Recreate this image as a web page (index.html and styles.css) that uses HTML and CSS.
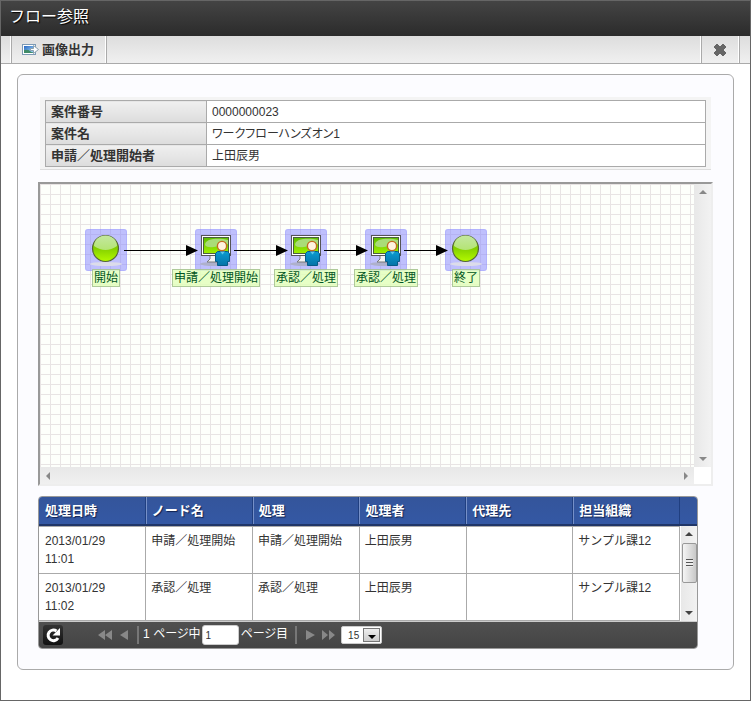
FILE: index.html
```
<!DOCTYPE html>
<html lang="ja">
<head>
<meta charset="utf-8">
<title>フロー参照</title>
<link rel="stylesheet" href="styles.css">
</head>
<body>
<svg class="defs" aria-hidden="true">
  <defs>
    <linearGradient id="ball" x1="0" y1="0" x2="0" y2="1"><stop offset="0" stop-color="#86cc10"/><stop offset=".5" stop-color="#84d000"/><stop offset="1" stop-color="#b4fa00"/></linearGradient>
    <linearGradient id="gloss" x1="0" y1="0" x2="0" y2="1"><stop offset="0" stop-color="#c4e8a0"/><stop offset="1" stop-color="#b4e474"/></linearGradient>
    <linearGradient id="screen" x1="0" y1="0" x2="0" y2="1"><stop offset="0" stop-color="#5cbc00"/><stop offset="1" stop-color="#a0f000"/></linearGradient>
    <linearGradient id="coat" x1="0" y1="0" x2="0" y2="1"><stop offset="0" stop-color="#0a9bd0"/><stop offset="1" stop-color="#0673a8"/></linearGradient>
    <linearGradient id="sky" x1="0" y1="0" x2="1" y2="1"><stop offset="0" stop-color="#2768c4"/><stop offset="1" stop-color="#a9dcf8"/></linearGradient>
    <symbol id="event" viewBox="0 0 42 42">
      <ellipse cx="21" cy="35" rx="16" ry="2" fill="#dcdcea"/>
      <circle cx="20.500" cy="19.500" r="13" fill="url(#ball)" stroke="#55653c" stroke-width="1.200"/>
      <path d="M9 17a11.500 10.500 0 0 1 23 0q-11.500 8-23 0z" fill="url(#gloss)"/>
    </symbol>
    <symbol id="task" viewBox="0 0 42 42">
      <ellipse cx="20" cy="35" rx="15" ry="2" fill="#aeb0cc"/>
      <path d="M15 26h9l2 7H12l3-3z" fill="#f4f4f4" stroke="#777"/>
      <rect x="6.500" y="6.500" width="29" height="20" fill="#fff" stroke="#555"/>
      <rect x="8.500" y="8.500" width="25" height="16" fill="url(#screen)" stroke="#4b5d40"/>
      <path d="M10 16c0-7 15-7 23-5v4q-8 2-14 3-7 1-9-2z" fill="#a9dc78"/>
      <path d="M20.500 24.500l2-2h10l2 2v8h-2v4h-10v-4h-2z" fill="url(#coat)" stroke="#075b88"/>
      <path d="M25 22.500l2.500 3 2.500-3z" fill="#5cc4e8"/>
      <circle cx="27" cy="17" r="4.600" fill="#fff3df" stroke="#c46a20" stroke-width="1.400"/>
    </symbol>
  </defs>
</svg>
<div class="page">
  <header class="titlebar"><h1>フロー参照</h1></header>
  <div class="toolbar">
    <button class="tool" type="button">
      <svg width="17" height="12" viewBox="0 0 17 12" aria-hidden="true"><rect x=".5" y=".5" width="13" height="10" fill="#fff" stroke="#7c9ab5"/><path d="M2 2h10v7H2z" fill="url(#sky)"/><path d="M2 6q4-1 6 1t4 1v1H2z" fill="#3f8b68"/><path d="M8.500 4.500h3v-3l5 4-5 4v-3h-3z" fill="#fff" stroke="#8aa0ae"/></svg>
      <span>画像出力</span>
    </button>
    <button class="tool close" type="button" aria-label="閉じる">
      <svg width="14" height="14" viewBox="0 0 14 14" aria-hidden="true"><path d="M4 1l3 3 3-3 3 3-3 3 3 3-3 3-3-3-3 3-3-3 3-3-3-3z" fill="#666" stroke="#666" stroke-linejoin="round"/></svg>
    </button>
  </div>
  <main class="panel">
    <div class="summary">
      <table>
        <tr><th scope="row">案件番号</th><td>0000000023</td></tr>
        <tr><th scope="row">案件名</th><td class="tight">ワークフローハンズオン1</td></tr>
        <tr><th scope="row">申請／処理開始者</th><td>上田辰男</td></tr>
      </table>
    </div>

    <div class="flow">
      <div class="canvas">
        <svg class="edges" width="420" height="90" viewBox="0 0 420 90" aria-hidden="true">
          <path d="M84 66.500h72M194 66.500h52M284 66.500h42M364 66.500h42" stroke="#000"/>
          <path d="M146 61v11l12-5.500zM236 61v11l12-5.500zM316 61v11l12-5.500zM396 61v11l12-5.500z"/>
        </svg>
        <div class="node n1"><svg class="icon"><use href="#event"/></svg><span>開始</span></div>
        <div class="node n2"><svg class="icon"><use href="#task"/></svg><span>申請／処理開始</span></div>
        <div class="node n3"><svg class="icon"><use href="#task"/></svg><span>承認／処理</span></div>
        <div class="node n4"><svg class="icon"><use href="#task"/></svg><span>承認／処理</span></div>
        <div class="node n5"><svg class="icon"><use href="#event"/></svg><span>終了</span></div>
      </div>
      <div class="bar vertical"><i class="arrow up"></i><i class="arrow down"></i></div>
      <div class="bar horizontal"><i class="arrow left"></i><i class="arrow right"></i></div>
    </div>

    <section class="history">
      <table class="head">
        <colgroup><col span="6"><col class="gutter"></colgroup>
        <thead><tr><th>処理日時</th><th>ノード名</th><th>処理</th><th>処理者</th><th>代理先</th><th>担当組織</th><th></th></tr></thead>
      </table>
      <div class="body">
        <table class="rows">
          <tbody>
            <tr><td>2013/01/29<br>11:01</td><td>申請／処理開始</td><td>申請／処理開始</td><td>上田辰男</td><td></td><td>サンプル課12</td></tr>
            <tr><td>2013/01/29<br>11:02</td><td>承認／処理</td><td>承認／処理</td><td>上田辰男</td><td></td><td>サンプル課12</td></tr>
          </tbody>
        </table>
        <div class="bar vertical"><i class="arrow up dark"></i><i class="thumb"></i><i class="arrow down dark"></i></div>
      </div>
      <footer class="pager">
        <button class="reload" type="button" aria-label="更新">
          <svg width="20" height="20" viewBox="0 0 20 20" aria-hidden="true"><path d="M13.500 6A5.300 5.300 0 1 0 15 13" fill="none" stroke="#fff" stroke-width="3"/><path d="M17 3v7.500H9.500z" fill="#fff"/></svg>
        </button>
        <button class="nav first" type="button" aria-label="最初"><svg width="14" height="10" viewBox="0 0 14 10"><path d="M7 0v10L0 5zM14 0v10L7 5z"/></svg></button>
        <button class="nav" type="button" aria-label="前"><svg width="8" height="10" viewBox="0 0 8 10"><path d="M8 0v10L0 5z"/></svg></button>
        <i class="sep"></i>
        <label class="pages" for="page">1 ページ中</label>
        <input id="page" type="text" value="1">
        <span class="unit">ページ目</span>
        <i class="sep"></i>
        <button class="nav" type="button" aria-label="次"><svg width="9" height="10" viewBox="0 0 9 10"><path d="M0 0v10l9-5z"/></svg></button>
        <button class="nav last" type="button" aria-label="最後"><svg width="13" height="10" viewBox="0 0 13 10"><path d="M0 0v10l6-5zM7 0v10l6-5z"/></svg></button>
        <div class="size">
          <select aria-label="表示件数"><option>15</option></select>
          <i class="drop"></i>
        </div>
      </footer>
    </section>
  </main>
</div>
</body>
</html>
```

FILE: styles.css
```
* { box-sizing: border-box; }
body {
  margin: 0;
  font-family: "Liberation Sans", "Noto Sans CJK JP", sans-serif;
  font-size: 12px;
  color: #333;
  background: #fff;
}
button { border: 0; padding: 0; background: none; font: inherit; color: inherit; }
table { border-collapse: collapse; border-spacing: 0; width: 100%; table-layout: fixed; }
.defs { position: absolute; width: 0; height: 0; }
.page { min-height: 100vh; border: 1px solid #666; }

.titlebar {
  height: 35px;
  padding: 0 8px;
  background: linear-gradient(#444, #2b2b2b);
}
.titlebar h1 {
  margin: 0;
  font-size: 16px;
  font-weight: 400;
  line-height: 32px;
  color: #fff;
  text-shadow: 1px 1px 1px #000;
}
.toolbar {
  display: flex;
  justify-content: space-between;
  height: 28px;
  padding: 0 10px;
  background: linear-gradient(#ddd, #f0f0f0);
  border-bottom: 1px solid #aaa;
}
.tool {
  display: flex;
  align-items: center;
  gap: 3px;
  padding: 0 12px 0 10px;
  border: 1px solid #aaa;
  border-width: 0 1px;
  box-shadow: -1px 0 #fff, inset -1px 0 #fff;
  font-size: 13px;
  font-weight: 700;
  line-height: 26px;
}
.close { padding: 0 12px 0 11px; }

.panel {
  margin: 10px 16px 30px;
  padding: 22px 20px 20px;
  border: 1px solid #aaa;
  border-radius: 6px;
  background: #fcfcff;
}
.summary {
  margin: 0 2px 12px;
  padding: 3px 5px 2px;
  background: #f4f4f4;
  border-bottom: 1px solid #ddd;
}
.summary th, .summary td {
  height: 22px;
  padding: 0 5px;
  border: 1px solid #aaa;
  text-align: left;
  line-height: 18px;
  background: #fff;
}
.summary th {
  width: 161px;
  font-size: 13px;
  background: linear-gradient(#f0f0f0, #dcdcdc);
}
.summary td { font-size: 12px; }
.tight { font-feature-settings: "palt"; }

.flow {
  display: grid;
  grid-template-columns: 1fr 17px;
  grid-template-rows: 283px 17px;
  border: 2px solid #eee;
  border-top-color: #999;
  border-left-color: #999;
  background: #fff;
}
.canvas {
  position: relative;
  overflow: hidden;
  background-color: #fdfffb;
  background-image: linear-gradient(#e8e4e4 1px, transparent 1px), linear-gradient(90deg, #e8e4e4 1px, transparent 1px);
  background-size: 10px 10px;
}
.edges { position: absolute; left: 0; top: 0; z-index: 1; }
.node {
  position: absolute;
  top: 45px;
  width: 42px;
  display: flex;
  flex-direction: column;
  align-items: center;
}
.icon {
  width: 42px;
  height: 42px;
  flex: none;
  border-radius: 3px;
  background: rgba(130, 130, 255, .5);
  box-shadow: inset 0 0 0 1px rgba(130, 130, 255, .2);
}
.node span {
  margin-top: -2px;
  padding: 0 1px;
  border: 1px solid rgba(120, 150, 110, .5);
  background: rgba(225, 255, 185, .8);
  line-height: 16px;
  white-space: nowrap;
  color: #052;
  z-index: 1;
}
.n1 { left: 45px; }
.n2 { left: 155px; }
.n3 { left: 245px; }
.n4 { left: 325px; }
.n5 { left: 405px; }

.bar { display: flex; justify-content: space-between; align-items: center; }
.bar.vertical { flex-direction: column; padding: 6px 0; background: linear-gradient(90deg, #e8e8e8, #f2f2f2); }
.bar.horizontal { padding: 0 6px; background: linear-gradient(#e8e8e8, #f0f0f0); }
.arrow { border: 4px solid transparent; }
.arrow.up { border-top: 0; border-bottom-color: #888; }
.arrow.down { border-bottom: 0; border-top-color: #888; }
.arrow.left { border-left: 0; border-right-color: #888; }
.arrow.right { border-right: 0; border-left-color: #888; }
.arrow.up.dark { border-bottom-color: #444; }
.arrow.down.dark { border-top-color: #444; }

.history {
  margin: 10px 15px 0 0;
  border: 1px solid #999;
  border-radius: 4px;
  overflow: hidden;
  background: #fff;
}
.gutter { width: 17px; }
.head th {
  height: 28px;
  padding: 0 6px;
  border-bottom: 2px solid #203668;
  background: linear-gradient(#34559b, #3458a4);
  box-shadow: inset -1px 0 #203f80, inset 1px 0 #7690c8;
  color: #fff;
  font-size: 13px;
  line-height: 26px;
  text-align: left;
  text-shadow: 1px 1px 1px #102250;
}
.head th:first-child { box-shadow: inset -1px 0 #203f80; }
.head th:last-child { padding: 0; box-shadow: none; }
.body {
  display: flex;
  height: 96px;
  border-bottom: 1px solid #ccc;
}
.rows { flex: 1; margin-right: 1px; align-self: flex-start; }
.rows td {
  height: 47px;
  padding: 5px 4px 4px 5px;
  border: 1px solid #aaa;
  border-left: 0;
  vertical-align: top;
  line-height: 18px;
}
.rows td:first-child { padding-left: 6px; }
.body .bar { width: 16px; }
.thumb {
  width: 15px;
  height: 40px;
  margin: 7px 0 auto;
  border: 1px solid #999;
  border-radius: 2px;
  background:
    repeating-linear-gradient(#555 0 1px, #eee 1px 3px) center / 7px 8px no-repeat,
    linear-gradient(90deg, #f5f5f5, #c8c8c8);
}
.pager {
  display: flex;
  align-items: center;
  height: 26px;
  padding: 0 4px;
  background: linear-gradient(#505050, #444);
  color: #fff;
}
.reload {
  width: 20px;
  height: 20px;
  margin-right: 35px;
  border-radius: 3px;
  background: linear-gradient(#333, #111);
}
.reload svg { display: block; }
.nav { display: flex; }
.nav svg { fill: #888; }
.first { margin-right: 8px; }
.last { margin: 0 6px 0 7px; }
.sep { width: 2px; height: 18px; margin: 0 9px; background: #777; }
.pages { margin: 0 1px 0 -5px; }
.pages, .unit { line-height: 18px; padding-bottom: 2px; white-space: nowrap; font-feature-settings: "palt"; }
.pager input {
  width: 37px;
  height: 20px;
  padding: 0 3px;
  border: 1px solid #ccc;
  border-radius: 3px;
  background: #fff;
  font: 10px "Liberation Sans", sans-serif;
  color: #333;
}
.unit { margin: 0 -2px 0 2px; }
.size { position: relative; display: flex; }
.size select {
  appearance: none;
  width: 41px;
  height: 18px;
  padding: 0 0 0 6px;
  border: 1px solid #ccc;
  border-radius: 2px;
  background: #fff;
  font: 10px "Liberation Sans", sans-serif;
  color: #333;
}
.drop {
  position: absolute;
  top: 2px;
  right: 2px;
  width: 17px;
  height: 14px;
  border: 1px solid #777;
  background: linear-gradient(#eee, #ccc);
  pointer-events: none;
}
.drop::after {
  content: "";
  position: absolute;
  left: 4px;
  top: 6px;
  border: 4px solid transparent;
  border-top-color: #000;
  border-bottom: 0;
}
```
